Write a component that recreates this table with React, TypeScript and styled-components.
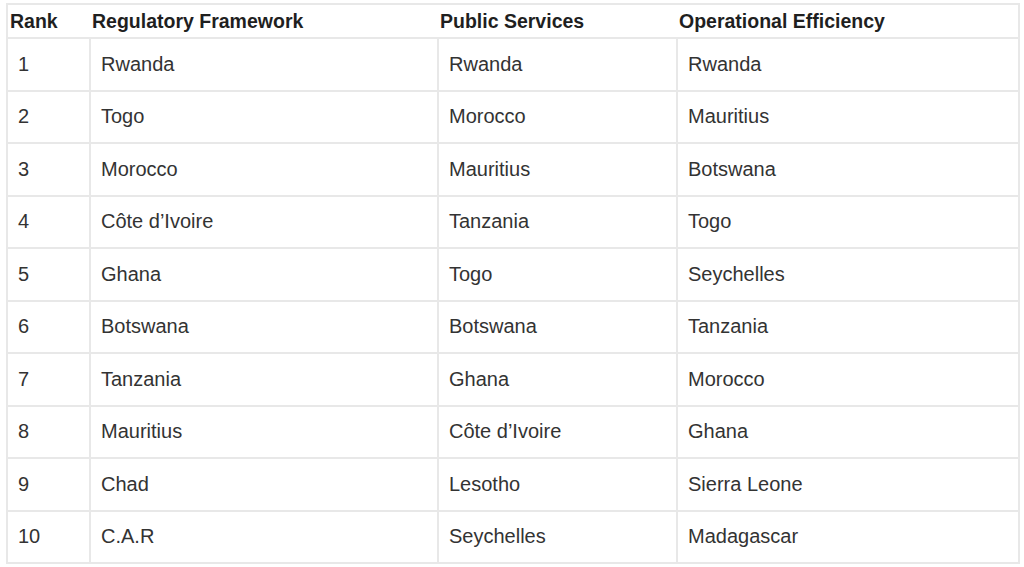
import React from 'react';
import styled, { createGlobalStyle } from 'styled-components';

const GlobalStyle = createGlobalStyle`
  html, body {
    margin: 0;
    padding: 0;
    background: #ffffff;
  }
`;

const Page = styled.div`
  width: 1024px;
  height: 567px;
  padding: 3px 0 0 6px;
  box-sizing: border-box;
  background: #ffffff;
`;

const Table = styled.table`
  width: 1012px;
  table-layout: fixed;
  border-collapse: collapse;
  border: 2px solid #e8e8e8;
  font-family: 'Liberation Sans', Arial, sans-serif;
`;

const Col = styled.col<{ $width: number }>`
  width: ${({ $width }) => $width}px;
`;

const HeadCell = styled.th`
  height: 32px;
  padding: 0 0 0 2px;
  text-align: left;
  font-size: 19.5px;
  font-weight: bold;
  color: #1f1f1f;
  border-bottom: 2px solid #e8e8e8;
  vertical-align: middle;
`;

const Cell = styled.td`
  height: 50.5px;
  padding: 0 0 0 10px;
  font-size: 20px;
  color: #333333;
  border: 2px solid #e8e8e8;
  vertical-align: middle;
  white-space: nowrap;
`;

const widths = [83, 348, 239, 342];

const headers = ['Rank', 'Regulatory Framework', 'Public Services', 'Operational Efficiency'];

const rows: [string, string, string, string][] = [
  ['1', 'Rwanda', 'Rwanda', 'Rwanda'],
  ['2', 'Togo', 'Morocco', 'Mauritius'],
  ['3', 'Morocco', 'Mauritius', 'Botswana'],
  ['4', 'Côte d’Ivoire', 'Tanzania', 'Togo'],
  ['5', 'Ghana', 'Togo', 'Seychelles'],
  ['6', 'Botswana', 'Botswana', 'Tanzania'],
  ['7', 'Tanzania', 'Ghana', 'Morocco'],
  ['8', 'Mauritius', 'Côte d’Ivoire', 'Ghana'],
  ['9', 'Chad', 'Lesotho', 'Sierra Leone'],
  ['10', 'C.A.R', 'Seychelles', 'Madagascar'],
];

const App = () => {
  return (
    <Page>
      <GlobalStyle />
      <Table>
        <colgroup>
          {widths.map((w, i) => (
            <Col key={i} $width={w} />
          ))}
        </colgroup>
        <thead>
          <tr>
            {headers.map((h) => (
              <HeadCell key={h}>{h}</HeadCell>
            ))}
          </tr>
        </thead>
        <tbody>
          {rows.map((r) => (
            <tr key={r[0]}>
              {r.map((v, i) => (
                <Cell key={i}>{v}</Cell>
              ))}
            </tr>
          ))}
        </tbody>
      </Table>
    </Page>
  );
};

export default App;
